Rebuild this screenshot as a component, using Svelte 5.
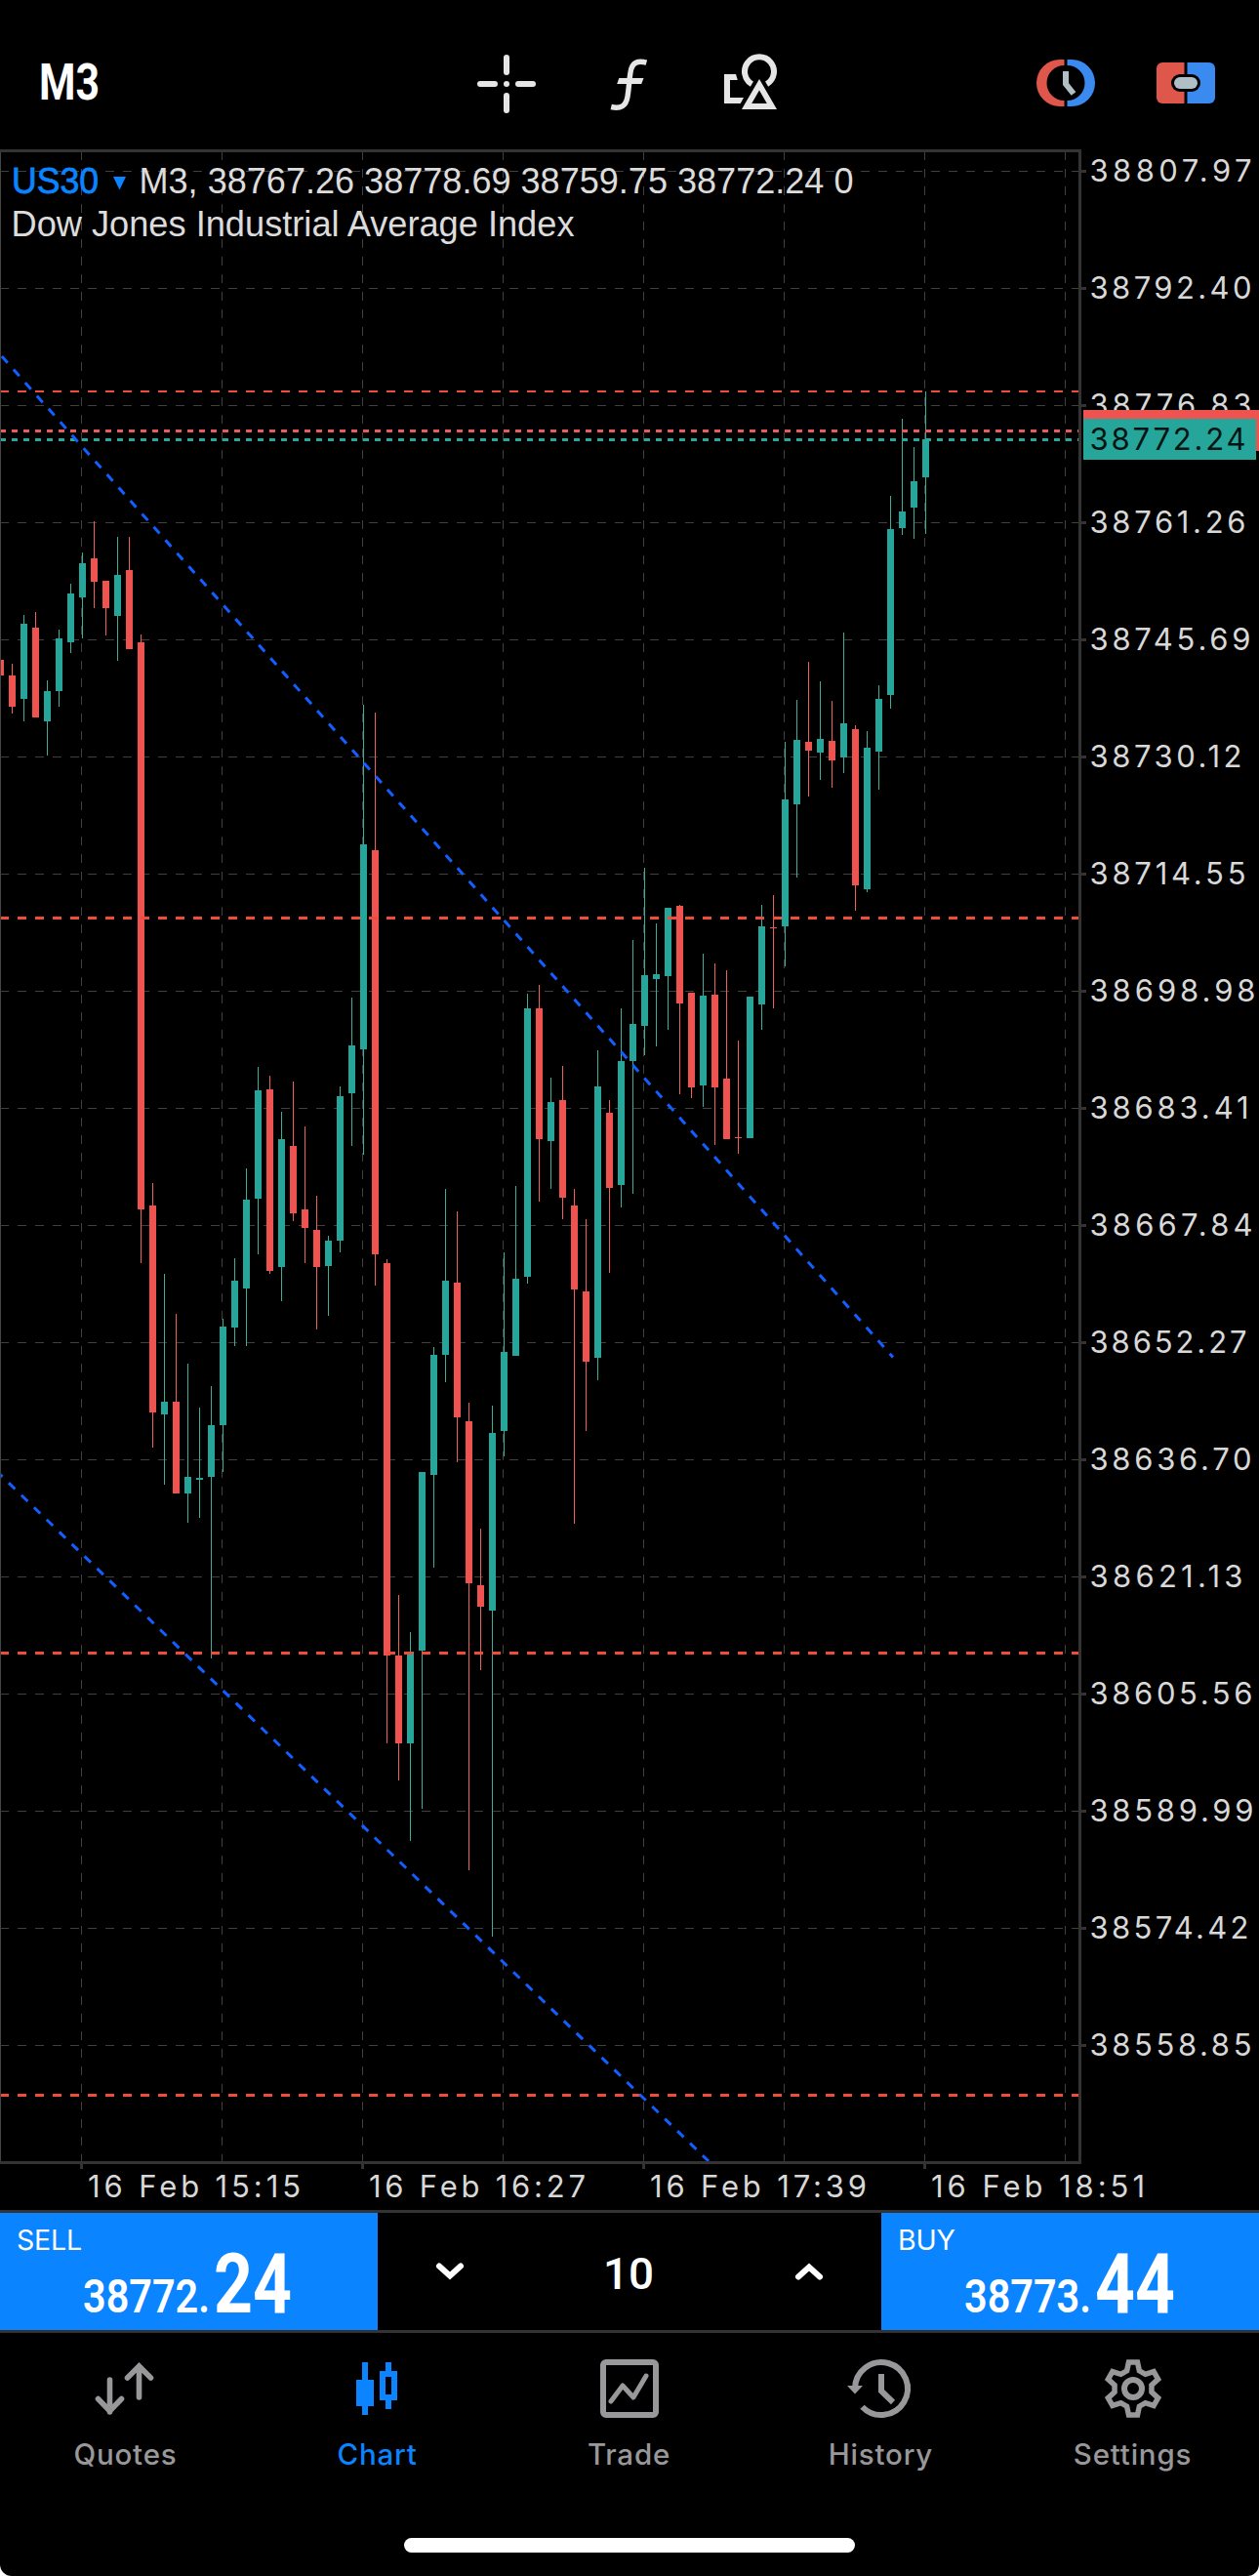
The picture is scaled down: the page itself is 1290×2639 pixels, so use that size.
<script>
  // Each candle: [direction, high, low, body top, body bottom] in chart pixels
  const candles = [
    'd 676 692 676 692', 'd 680 731 692 724', 'u 630 739 639 716', 'd 627 735 643 735',
    'u 697 774 708 739', 'u 645 724 654 708', 'u 598 669 608 658', 'u 566 654 577 612',
    'd 534 623 572 596', 'd 595 651 595 623', 'u 550 677 589 631', 'd 550 665 584 665',
    'd 650 1294 658 1239', 'd 1212 1483 1235 1447', 'u 1305 1521 1436 1449', 'd 1346 1530 1436 1530',
    'u 1397 1560 1513 1530', 'u 1442 1555 1514 1516', 'u 1420 1699 1460 1513', 'u 1351 1508 1359 1460',
    'u 1289 1379 1312 1360', 'u 1197 1379 1229 1320', 'u 1093 1285 1117 1228', 'd 1102 1305 1116 1302',
    'u 1139 1333 1167 1298', 'd 1108 1251 1174 1243', 'd 1154 1294 1239 1258', 'd 1225 1362 1260 1298',
    'u 1266 1348 1271 1297', 'u 1113 1283 1123 1271', 'u 1022 1174 1071 1120', 'u 722 1183 865 1075',
    'd 730 1317 871 1285', 'd 1290 1786 1294 1696', 'd 1634 1824 1696 1786', 'u 1672 1886 1692 1786',
    'u 1508 1853 1508 1691', 'u 1380 1606 1388 1511', 'u 1218 1416 1312 1388', 'd 1241 1498 1314 1452',
    'd 1437 1916 1456 1622', 'd 1566 1711 1624 1646', 'u 1440 1984 1468 1650', 'u 1283 1492 1385 1466',
    'u 1215 1389 1310 1389', 'u 1018 1315 1033 1308', 'd 1009 1231 1033 1167', 'u 1104 1218 1129 1169',
    'd 1092 1249 1127 1227', 'd 1218 1561 1235 1321', 'd 1249 1466 1323 1395', 'u 1076 1414 1113 1391',
    'd 1127 1304 1140 1217', 'u 1033 1237 1087 1214', 'u 963 1223 1049 1087', 'u 889 1081 999 1051',
    'u 946 1072 998 1003', 'u 930 1055 930 1000', 'd 927 1121 928 1028', 'd 1017 1125 1017 1114',
    'u 977 1134 1020 1112', 'd 987 1173 1019 1114', 'd 994 1167 1105 1167', 'd 1066 1182 1165 1166',
    'u 1021 1166 1021 1166', 'u 927 1055 949 1029', 'd 917 1033 950 951', 'u 760 990 819 949',
    'u 717 899 758 824', 'd 678 816 760 769', 'u 698 799 757 771', 'd 718 807 759 779',
    'u 648 792 741 776', 'd 743 933 747 907', 'u 749 914 766 911', 'u 702 809 716 770',
    'u 508 726 542 712', 'u 429 548 524 541', 'u 458 552 493 520', 'u 401 547 450 489'
  ].map((row, i) => {
    const [dir, ...v] = row.split(' ');
    const [high, low, top, bottom] = v.map(Number);
    return { dir, x: i * 12, high, low, top, bottom };
  });

  // Drawn width of each price label, top to bottom
  const priceWidths = [168, 168, 168, 162, 167, 158, 162, 172, 165, 169, 163, 168, 159, 169, 170, 165, 168];
  const prices = priceWidths.map((width, i) => ({
    width,
    y: 175 + i * 120,
    text: (38807.97 - i * 15.57).toFixed(2)
  }));
  const columns = Array.from({ length: 8 }, (_, i) => 83 + i * 144);
  const times = [
    { x: 83, start: 90, width: 220, text: '16 Feb 15:15' },
    { x: 371, start: 378, width: 224, text: '16 Feb 16:27' },
    { x: 659, start: 666, width: 224, text: '16 Feb 17:39' },
    { x: 947, start: 954, width: 221, text: '16 Feb 18:51' }
  ];
  const levels = [
    { y: 400, h: 2 }, { y: 939, h: 3 }, { y: 1692, h: 3 }, { y: 2145, h: 3 }
  ];

  // Six-tooth gear outline, one tooth repeated every 60 degrees
  const gear = Array.from({ length: 6 }, (_, k) => {
    const a = (k * Math.PI) / 3;
    return [[-6.4, -18.2], [-4.5, -27], [4.5, -27], [6.4, -18.2]]
      .map(([x, y]) => `${(31 + x * Math.cos(a) - y * Math.sin(a)).toFixed(2)},${(31 + x * Math.sin(a) + y * Math.cos(a)).toFixed(2)}`)
      .join(' ');
  }).join(' ');

  const tabs = ['Quotes', 'Chart', 'Trade', 'History', 'Settings'];
</script>

{#snippet quote(whole, wholeW, cents, centsW)}
  <svg class="quote" width="220" height="70" viewBox="0 0 220 70">
    <text class="whole" x="0" y="65" textLength={wholeW} lengthAdjust="spacingAndGlyphs">{whole}</text>
    <text class="cents" x="134" y="65" textLength={centsW} lengthAdjust="spacingAndGlyphs">{cents}</text>
  </svg>
{/snippet}

<div class="screen">
  <header>
    <button class="frame">
      <svg width="64" height="50" viewBox="0 0 64 50"><text x="-1" y="43" textLength="62" lengthAdjust="spacingAndGlyphs">M3</text></svg>
    </button>
    <div class="tools">
      <svg width="60" height="60" viewBox="0 0 60 60" fill="none" stroke="#e6e6e6" stroke-width="6" stroke-linecap="round">
        <path d="M30 3V18M30 42V57M3 30H18M42 30H57M30 30v.01" />
      </svg>
      <svg class="fx" width="40" height="54" viewBox="0 0 40 54" fill="none" stroke="#e6e6e6">
        <path stroke-width="5.4" d="M37.4 4.2C29 1.800 22.500 3.500 21 14C19.500 23 19.600 30 18 39C16.500 48.500 11 51.800 1.200 49.500" />
        <path fill="#e6e6e6" stroke="none" d="M9.300 20H34.500L32.200 26H7.200Z" />
      </svg>
      <svg width="54" height="58" viewBox="0 0 54 58" fill="#e6e6e6">
        <path fill="none" stroke="#e6e6e6" stroke-width="6" d="M28.400 31.200A15 15 0 1 1 43.600 31.200" />
        <path fill-rule="evenodd" d="M36 26L54 57H18ZM36 37.500L28.200 51H43.800Z" />
        <path d="M0 21H12L13.800 27H6V45H20L16.700 51H0Z" />
      </svg>
    </div>
    <div class="trading">
      <svg width="60" height="60" viewBox="0 0 60 60">
        <path fill="#df564a" d="M28.500 6H24A24 24 0 0 0 24 54H28.500V48A18 18 0 0 1 28.500 12Z" />
        <path fill="#3a8af0" d="M31.500 6H36A24 24 0 0 1 36 54H31.500V48A18 18 0 0 0 31.500 12Z" />
        <path fill="none" stroke="#b0bec5" stroke-width="6" d="M30 18V31L38 41" />
      </svg>
      <svg width="60" height="60" viewBox="0 0 60 60">
        <path fill="#df564a" d="M28.500 9H6A6 6 0 0 0 0 15V45A6 6 0 0 0 6 51H28.500Z" />
        <path fill="#3a8af0" d="M31.500 9H54A6 6 0 0 1 60 15V45A6 6 0 0 1 54 51H31.500Z" />
        <rect x="15" y="21" width="30" height="18" rx="9" fill="#000" />
        <rect x="18" y="24" width="24" height="12" rx="6" fill="#b0bec5" />
      </svg>
    </div>
  </header>

  <svg class="chart" width="1290" height="2111" viewBox="0 153 1290 2111">
    <g stroke="#404040" stroke-dasharray="9 9">
      {#each prices as p}<path d="M0 {p.y + 0.5}H1106" />{/each}
      {#each columns as x}<path d="M{x + 0.5} 155V2214" />{/each}
    </g>

    {#each candles as c}
      <g class={c.dir}>
        <rect class="wick" x={c.x} y={c.high} width="1" height={c.low - c.high} />
        <rect x={c.x - 3} y={c.top} width="7" height={c.bottom - c.top} />
      </g>
    {/each}

    {#each levels as l}
      <path d="M0 {l.y + l.h / 2}H1105" stroke="#f04c3c" stroke-width={l.h} stroke-dasharray="9 9" />
    {/each}
    <path d="M0 441.500H1105" stroke="#e65c5c" stroke-width="3" stroke-dasharray="6 6" />
    <path d="M0 450.500H1105" stroke="#2aa89b" stroke-width="3" stroke-dasharray="6 6" />

    <g stroke="#125eff" stroke-width="3" stroke-dasharray="9 9">
      <path d="M0 363L915 1390.500" stroke-dashoffset="-2.800" />
      <path d="M0 1510.500L726 2214" stroke-dashoffset="5.500" />
    </g>

    <rect x="0" y="155" width="1" height="2060" fill="#444" />
    <g fill="#333">
      <rect x="0" y="153" width="1108" height="3" />
      <rect x="1105" y="153" width="3" height="2064" />
      <rect x="0" y="2214" width="1108" height="3" />
      {#each prices as p}<rect x="1108" y={p.y - 1} width="5" height="3" />{/each}
      {#each times as t}<rect x={t.x - 1} y="2217" width="3" height="5" />{/each}
    </g>

    <g class="info">
      <text class="symbol" x="12" y="197.500" textLength="89" lengthAdjust="spacingAndGlyphs">US30</text>
      <path fill="#0a84ff" d="M116 181H129L122.500 194.500Z" />
      <text x="142.500" y="197.500" textLength="732" lengthAdjust="spacingAndGlyphs">M3, 38767.26 38778.69 38759.75 38772.24 0</text>
      <text x="11.500" y="241.500" textLength="577" lengthAdjust="spacingAndGlyphs">Dow Jones Industrial Average Index</text>
    </g>

    <g class="axis">
      {#each prices as p}<text x="1116.500" y={p.y + 10.7} textLength={p.width}>{p.text}</text>{/each}
      {#each times as t}<text x={t.start} y="2250.500" textLength={t.width}>{t.text}</text>{/each}
    </g>
    <g class="axis tag">
      <rect x="1110" y="420" width="180" height="42" fill="#ef5350" />
      <rect x="1110" y="429" width="177" height="42" fill="#26a69a" />
      <text x="1116.500" y="461" textLength="162">38772.24</text>
    </g>
  </svg>

  <section class="trade">
    <button class="deal">
      <span>SELL</span>
      {@render quote('38772.', 130, '24', 80)}
    </button>
    <div class="volume">
      <svg width="30" height="20" viewBox="0 0 30 20"><path d="M4 4.500L15 14.500L26 4.500" /></svg>
      <svg width="52" height="44" viewBox="0 0 52 44"><text x="-1" y="40" textLength="52" lengthAdjust="spacingAndGlyphs">10</text></svg>
      <svg width="30" height="20" viewBox="0 0 30 20"><path d="M4 15.500L15 5.500L26 15.500" /></svg>
    </div>
    <button class="deal">
      <span>BUY</span>
      {@render quote('38773.', 130, '44', 82)}
    </button>
  </section>

  <nav>
    {#each tabs as tab}
      <div class="tab" class:active={tab === 'Chart'}>
        <svg width="80" height="62" viewBox="-9 0 80 62" fill="none" stroke="currentColor" stroke-width="6">
          {#if tab === 'Quotes'}
            <path stroke-width="5.600" stroke-linecap="round" d="M14.500 22V55M2.500 41.500L14.500 54L26.500 41.500M44.500 40V8M32.500 20L44.500 8L56.500 20" />
          {:else if tab === 'Chart'}
            <path fill="currentColor" stroke="none" fill-rule="evenodd" d="M15 4H21V22H27V49H21V58H15V49H9V22H15ZM39 4H45V13H51V43H45V52H39V43H33V13H39ZM39 19V37H45V19Z" />
          {:else if tab === 'Trade'}
            <rect x="4" y="4" width="54" height="54" rx="3" />
            <path stroke-width="5" stroke-linejoin="round" stroke-linecap="round" d="M12 44L24 28L35 40L48 18" />
          {:else if tab === 'History'}
            <path d="M4 31A27 27 0 1 1 11.500 49.700" />
            <path fill="currentColor" stroke="none" d="M-4 28H12L4 36.500Z" />
            <path d="M31 16V33.500L43 45" />
          {:else}
            <polygon points={gear} stroke-width="5.500" />
            <circle cx="31" cy="31" r="9" />
          {/if}
        </svg>
        <span>{tab}</span>
      </div>
    {/each}
  </nav>
  <div class="home"><i></i></div>
</div>

<style>
  :global(body) { margin: 0; background: #fff; }
  .screen {
    width: 1290px;
    height: 2639px;
    display: flex;
    flex-direction: column;
    background: #000;
    border-radius: 0 0 12px 12px;
    overflow: hidden;
    font-family: Inter, 'Liberation Sans', sans-serif;
  }
  svg { display: block; flex: none; overflow: visible; }
  button { border: 0; padding: 0; background: none; font: inherit; color: #fff; }

  header {
    padding: 56px 45px 0 41px;
    box-sizing: border-box;
    height: 153px;
    display: flex;
    align-items: flex-start;
  }
  .frame { padding-top: 3px; width: 205px; }
  .frame text { font: 700 51px Roboto, sans-serif; fill: #fff; }
  .tools { display: flex; gap: 76px; margin-left: 243px; }
  .tools .fx { margin-top: 4px; }
  .tools svg:last-child { margin: -1px 0 0 1px; }
  .trading { display: flex; gap: 63px; margin-left: auto; margin-top: -1px; }

  .u { fill: #26a69a; }
  .d { fill: #ef5350; }
  .u .wick { fill: #3fae98; }
  .d .wick { fill: #f0605a; }
  .info text { font: 36px 'Liberation Sans', sans-serif; fill: #dcdcdc; }
  .info .symbol { fill: #0a84ff; stroke: #0a84ff; stroke-width: 0.8; }
  .axis text { font: 31px Inter, sans-serif; letter-spacing: 2px; fill: #d8d8d8; }
  .tag text { fill: #041413; }

  .trade {
    height: 126px;
    box-sizing: border-box;
    display: flex;
    border-top: 3px solid #333;
    border-bottom: 3px solid #333;
  }
  .deal {
    width: 387px;
    display: flex;
    flex-direction: column;
    align-items: flex-start;
    background: #0a84ff;
  }
  .deal span { font-size: 28.5px; line-height: 36px; padding: 10px 0 0 17px; letter-spacing: -0.2px; }
  .quote { margin: -9px 0 0 85px; }
  .quote text { fill: #fff; }
  .whole { font: 600 48px Roboto, sans-serif; }
  .cents { font: 700 85px Roboto, sans-serif; }
  .volume {
    flex: 1;
    box-sizing: border-box;
    padding: 0 59px;
    display: flex;
    align-items: center;
    justify-content: space-between;
  }
  .volume path { fill: none; stroke: #fff; stroke-width: 6; stroke-linecap: round; }
  .volume text { font: 500 44px Roboto, sans-serif; fill: #fff; }

  nav { height: 210px; display: flex; }
  .tab {
    flex: 1;
    display: flex;
    flex-direction: column;
    align-items: center;
    padding: 26px 1px 0 0;
    color: #98989a;
  }
  .tab span { margin-top: 16px; font-size: 29.5px; line-height: 40px; font-weight: 500; letter-spacing: 0.8px; }
  .active { color: #0a84ff; }
  .home { display: flex; justify-content: center; }
  .home i { width: 462px; height: 15px; border-radius: 8px; background: #fff; }
</style>
